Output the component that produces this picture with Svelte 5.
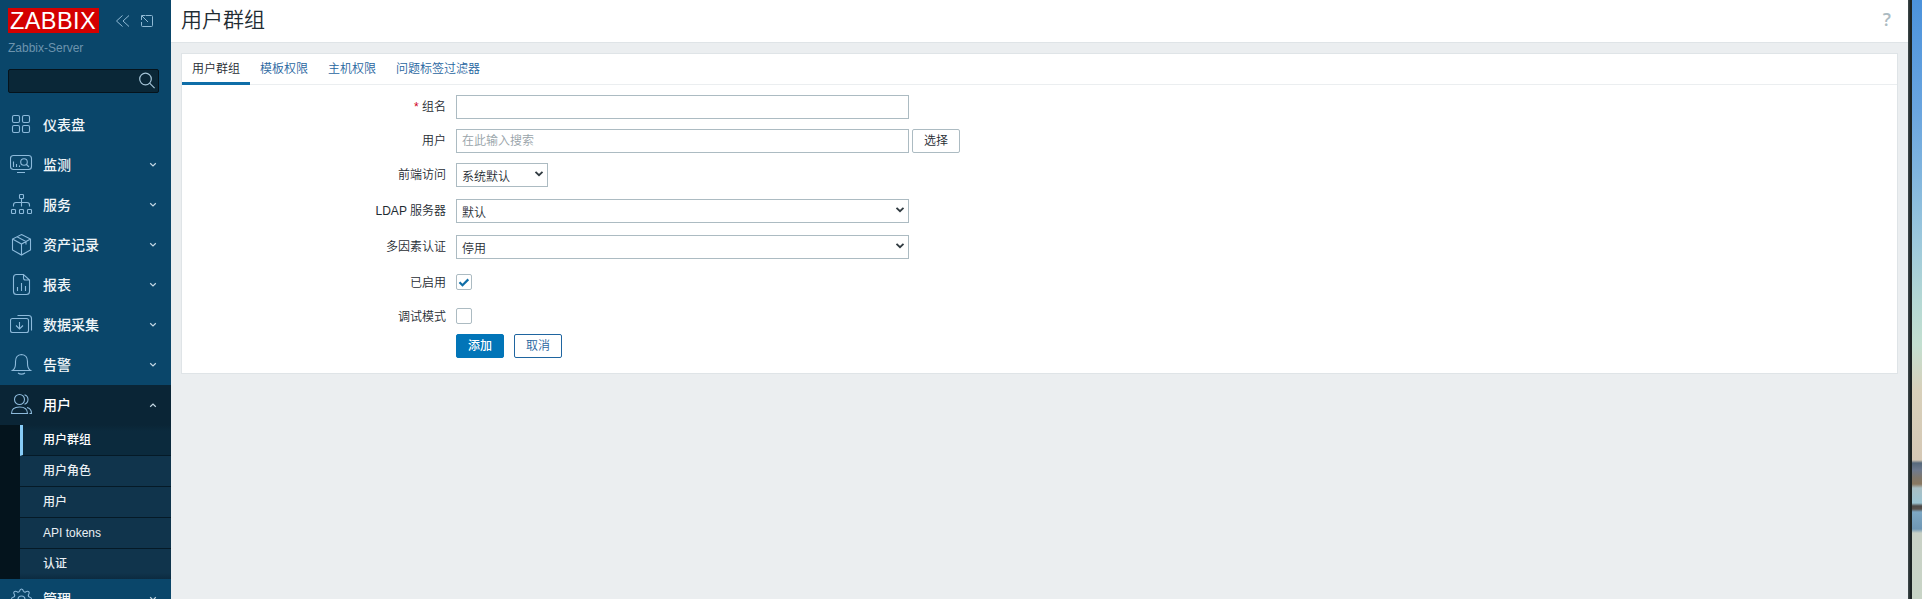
<script>
  const menu = [
    { label: '仪表盘', icon: 'dashboard' },
    { label: '监测', icon: 'monitor', sub: true },
    { label: '服务', icon: 'services', sub: true },
    { label: '资产记录', icon: 'inventory', sub: true },
    { label: '报表', icon: 'reports', sub: true },
    { label: '数据采集', icon: 'collection', sub: true },
    { label: '告警', icon: 'alerts', sub: true },
    {
      label: '用户', icon: 'users', sub: true,
      children: ['用户群组', '用户角色', '用户', 'API tokens', '认证']
    },
    { label: '管理', icon: 'admin', sub: true }
  ];
  const tabs = ['用户群组', '模板权限', '主机权限', '问题标签过滤器'];
  let name = $state('');
  let users = $state('');
  let enabled = $state(true);
  let debug = $state(false);
</script>

{#snippet icon(kind)}
  <svg class="icon" width="24" height="24" viewBox="0 0 24 24">
    {#if kind === 'dashboard'}
      <rect x="2.5" y="2.5" width="7" height="7" rx="1.5" /><rect x="12.5" y="2.5" width="7" height="7" rx="1.5" />
      <rect x="2.5" y="12.5" width="7" height="7" rx="1.5" /><rect x="12.5" y="12.5" width="7" height="7" rx="1.5" />
    {:else if kind === 'monitor'}
      <rect x="0.5" y="2.5" width="21" height="14" rx="3" />
      <path d="M7 19.5h8M3.5 8.5v5.500M6.500 11v3M9.500 12.500v1.500M16.500 11.500l2.500 2.500" /><circle cx="14" cy="9" r="3.300" />
    {:else if kind === 'services'}
      <rect x="9.500" y="1.500" width="4" height="4" rx="0.800" />
      <rect x="1.500" y="16.500" width="4" height="4" rx="0.800" /><rect x="9.500" y="16.500" width="4" height="4" rx="0.800" /><rect x="17.500" y="16.500" width="4" height="4" rx="0.800" />
      <path d="M11.500 5.500v8M3.500 13.500v-1.500q0-2.500 2.500-2.500h11q2.500 0 2.500 2.500v1.500" />
    {:else if kind === 'inventory'}
      <path d="M11.500 1.500l9 4.500v11l-9 5-9-5v-11zM2.500 6l9 5 9-5M11.500 11v11M7 3.800l9 4.700v3" />
    {:else if kind === 'reports'}
      <path d="M13.500 1.500h-7q-3 0-3 3v14q0 3 3 3h10q3 0 3-3v-11.500zM13.500 1.500v3.500q0 2 2 2h4M7.500 14v4M11.500 10v8M15.500 13v5" />
    {:else if kind === 'collection'}
      <rect x="0.500" y="5.500" width="18" height="14" rx="2" />
      <path d="M7.500 2.500h11q3 0 3 3v12M9.500 9v7M6 12.500l3.500 3.500 3.500-3.500" />
    {:else if kind === 'alerts'}
      <path d="M2.500 17.500q3-2 3-7v-2q0-6.500 6-7 6 .5 6 7v2q0 5 3 7zM8 20q3.500 2.200 7 0" />
    {:else if kind === 'users'}
      <circle cx="9.500" cy="6.500" r="5" />
      <path d="M1.500 20.500q0-6.500 8-6.500t8 6.500zM14.500 1.800q3.500 1.200 3.500 4.700t-3.500 4.700M17 14.500q4.500 1 4.500 6h-2" />
    {:else}
      <circle cx="11.500" cy="12.500" r="3.500" />
      <path d="M9.600 4.200q.4-2.200 1.900-2.200t1.900 2.200q.8 1.300 2.300.7 2-1.300 3 -.2t-.2 3q-.6 1.600.8 2.300 2.200.4 2.200 2t-2.200 2q-1.400.7-.8 2.300 1.300 2 .2 3t-3-.2q-1.500-.6-2.300.7-.4 2.200-1.900 2.200t-1.900-2.200q-.8-1.300-2.300-.7-2 1.300-3 .2t.2-3q.6-1.600-.8-2.300-2.200-.4-2.200-2t2.200-2q1.400-.7.800-2.300-1.300-2-.2-3t3 .2q1.500.6 2.300-.7z" />
    {/if}
  </svg>
{/snippet}

{#snippet arrow()}
  <svg class="arrow" width="10" height="8" viewBox="0 0 10 8"><path d="M1.500 1.800l3.500 3.400 3.500-3.400" /></svg>
{/snippet}

<div class="screen">
  <aside>
    <div class="brand">
      <div class="logo">ZABBIX</div>
      <svg width="40" height="16" viewBox="0 0 40 16">
        <path d="M7.500 2.500l-6 5.500 6 5.500M14 2.500l-6 5.500 6 5.500" />
        <path d="M30.500 2.500h6q1 0 1 1v9q0 1-1 1h-9q-1 0-1-1v-3.500M26.500 7v-4.500h3.500M27 3l6 6" />
      </svg>
    </div>
    <div class="server">Zabbix-Server</div>
    <div class="search">
      <svg width="18" height="18" viewBox="0 0 18 18"><circle cx="7.500" cy="7" r="5.800" /><path d="M11.600 11.200l5 5" /></svg>
    </div>
    <nav>
      {#each menu as m}
        <div class="item" class:open={m.children}>
          {@render icon(m.icon)}
          <span>{m.label}</span>
          {#if m.sub}
            <svg class="chev" class:up={m.children} width="8" height="6" viewBox="0 0 8 6"><path d="M1.200 1.300l2.800 2.700 2.800-2.700" /></svg>
          {/if}
        </div>
        {#if m.children}
          <div class="submenu">
            {#each m.children as c, i}
              <div class="subitem" class:current={i === 0}>{c}</div>
            {/each}
          </div>
        {/if}
      {/each}
    </nav>
  </aside>

  <main>
    <header><h1>用户群组</h1><span class="help">?</span></header>
    <section>
      <div class="tabs">
        {#each tabs as t, i}<div class="tab" class:active={i === 0}>{t}</div>{/each}
      </div>
      <form onsubmit={(e) => e.preventDefault()}>
        <div class="row"><label for="name"><i>*</i> 组名</label><input id="name" class="text" bind:value={name} /></div>
        <div class="row"><label for="users">用户</label><input id="users" class="text" placeholder="在此输入搜索" bind:value={users} /><button class="pick">选择</button></div>
        <div class="row tall"><span class="label">前端访问</span><div class="select short"><span>系统默认</span>{@render arrow()}</div></div>
        <div class="row tall"><span class="label">LDAP 服务器</span><div class="select"><span>默认</span>{@render arrow()}</div></div>
        <div class="row tall"><span class="label">多因素认证</span><div class="select"><span>停用</span>{@render arrow()}</div></div>
        <div class="row">
          <span class="label">已启用</span>
          <button class="check" aria-label="已启用" onclick={() => (enabled = !enabled)}>
            {#if enabled}<svg width="14" height="14" viewBox="0 0 14 14"><path d="M2.500 7.200l3 3 5.800-5.800" /></svg>{/if}
          </button>
        </div>
        <div class="row">
          <span class="label">调试模式</span>
          <button class="check" aria-label="调试模式" onclick={() => (debug = !debug)}>
            {#if debug}<svg width="14" height="14" viewBox="0 0 14 14"><path d="M2.500 7.200l3 3 5.800-5.800" /></svg>{/if}
          </button>
        </div>
        <div class="actions"><button class="primary">添加</button><button class="secondary">取消</button></div>
      </form>
    </section>
  </main>
  <div class="frame"></div>
  <div class="wallpaper"></div>
</div>

<style>
  :global(body) { overflow: hidden; }
  * { box-sizing: border-box; }
  svg { fill: none; flex: none; }
  .screen {
    display: flex;
    height: 599px;
    overflow: hidden;
    background: #ebeef0;
    color: #1f2c33;
    font: 12px/24px "Liberation Sans", "Noto Sans CJK SC", sans-serif;
  }
  aside { width: 171px; flex: none; background: #0a466a; overflow: hidden; }
  .brand { display: flex; align-items: flex-start; padding: 8px 0 0 8px; height: 37px; }
  .logo {
    width: 91px; height: 25px; padding-left: 2px; background: #d40000; color: #fff;
    font-size: 23.500px; line-height: 26px; white-space: nowrap; letter-spacing: 0.400px;
  }
  .brand svg { margin: 5px 0 0 16px; stroke: #8fb9d4; stroke-width: 1; }
  .server { padding-left: 8px; height: 32px; line-height: 22px; color: #6d94ae; }
  .search {
    display: flex; justify-content: flex-end; align-items: center;
    width: 151px; height: 24px; margin-left: 8px; padding-right: 2px;
    background: #0a2737; border: 1px solid #05131c; border-radius: 2px;
  }
  .search svg { stroke: #a5c5d8; stroke-width: 1.200; }
  nav { padding-top: 12px; }
  .item { display: flex; align-items: center; height: 40px; padding: 0 14px 0 10px; color: #f0f5f8; font-size: 14px; font-weight: 500; }
  .item span { flex: 1; margin-left: 9px; }
  .item.open { background: #0a2536; color: #fff; }
  .icon { stroke: #8dbadb; stroke-width: 1.100; }
  .chev { stroke: #c5d9e5; stroke-width: 1.200; }
  .up { transform: rotate(180deg); }
  .submenu { padding-left: 20px; background: #04141d; }
  .subitem {
    height: 31px; padding-left: 23px; line-height: 31px; font-weight: 500;
    background: #10344c; border-bottom: 1px solid #051a27; color: #e9eff3;
  }
  .subitem:last-child { border-bottom: 0; height: 30px; background: linear-gradient(#10344c 24px, #0c2b40); }
  .current { background: linear-gradient(#0a2536, #0b2a3d 6px); color: #fff; border-left: 3px solid #87ccf7; padding-left: 20px; }
  main { width: 1737px; flex: none; }
  header {
    display: flex; justify-content: space-between; height: 43px; padding: 0 17px 0 10px;
    background: #fff; border-bottom: 1px solid #dfe4e7;
  }
  h1 { margin: 0; font-size: 21px; line-height: 39px; font-weight: 350; }
  .help { font: 600 18px/39px "Open Sans", sans-serif; color: #acbbc2; }
  section { margin: 10px 10px 0 10px; height: 321px; background: #fff; border: 1px solid #dfe4e7; }
  .tabs { display: flex; height: 31px; border-bottom: 1px solid #ebeef0; }
  .tab { height: 31px; padding: 0 10px; line-height: 31px; color: #1f65a0; font-weight: 350; }
  .tab.active { color: #1f2c33; border-bottom: 3px solid #0f6ea8; }
  form { padding-top: 10px; font-weight: 350; }
  .row { display: flex; height: 34px; }
  .tall { height: 36px; }
  .row label, .label { width: 264px; margin-right: 10px; text-align: right; }
  .row i { color: #d0021b; font-style: normal; }
  .text, .select { width: 453px; height: 24px; border: 1px solid #acbbc2; background: #fff; font: inherit; }
  .text { padding: 0 5px; outline: 0; color: inherit; }
  .text::placeholder { color: #98a3a9; }
  .select { display: flex; align-items: center; justify-content: space-between; padding: 3px 3px 0 5px; }
  .select span { line-height: 20px; }
  .short { width: 92px; }
  .arrow { stroke: #303a40; stroke-width: 1.800; margin-top: -5px; }
  button { height: 24px; width: 48px; padding: 0; font: inherit; line-height: 22px; border: 1px solid #acbbc2; border-radius: 2px; background: #fff; color: #1f2c33; }
  .pick { margin-left: 3px; }
  .check { width: 16px; height: 16px; margin-top: 3px; line-height: 0; }
  .check svg { stroke: #0f6ea8; stroke-width: 2.200; display: block; }
  .actions { display: flex; gap: 10px; padding-left: 274px; margin-top: -5px; }
  .actions .primary { background: #0275b8; border-color: #0275b8; color: #fff; font-weight: 500; }
  .actions .secondary { border-color: #1f65a0; color: #1f65a0; }
  .frame { width: 4px; background: linear-gradient(90deg, #3a4446 1px, #1c2323 2px); flex: none; }
  .wallpaper {
    width: 10px; flex: none;
    background: linear-gradient(#4b92dc 0, #6aa5df 110px, #7fb4de 170px, #9cc8dc 240px, #b4d8d4 300px, #c3dfd0 345px, #d8d0ba 390px, #d5c8b5 460px, #56697b 463px, #6e7a8e 470px, #80786b 478px, #8a7860 484px, #a9bfc4 488px, #9cc4d2 503px, #4e4a48 506px, #5a534e 509px, #7ea8c4 512px, #6f97b4 529px, #c9d1c6 533px, #c8d4c6 599px);
  }
</style>
